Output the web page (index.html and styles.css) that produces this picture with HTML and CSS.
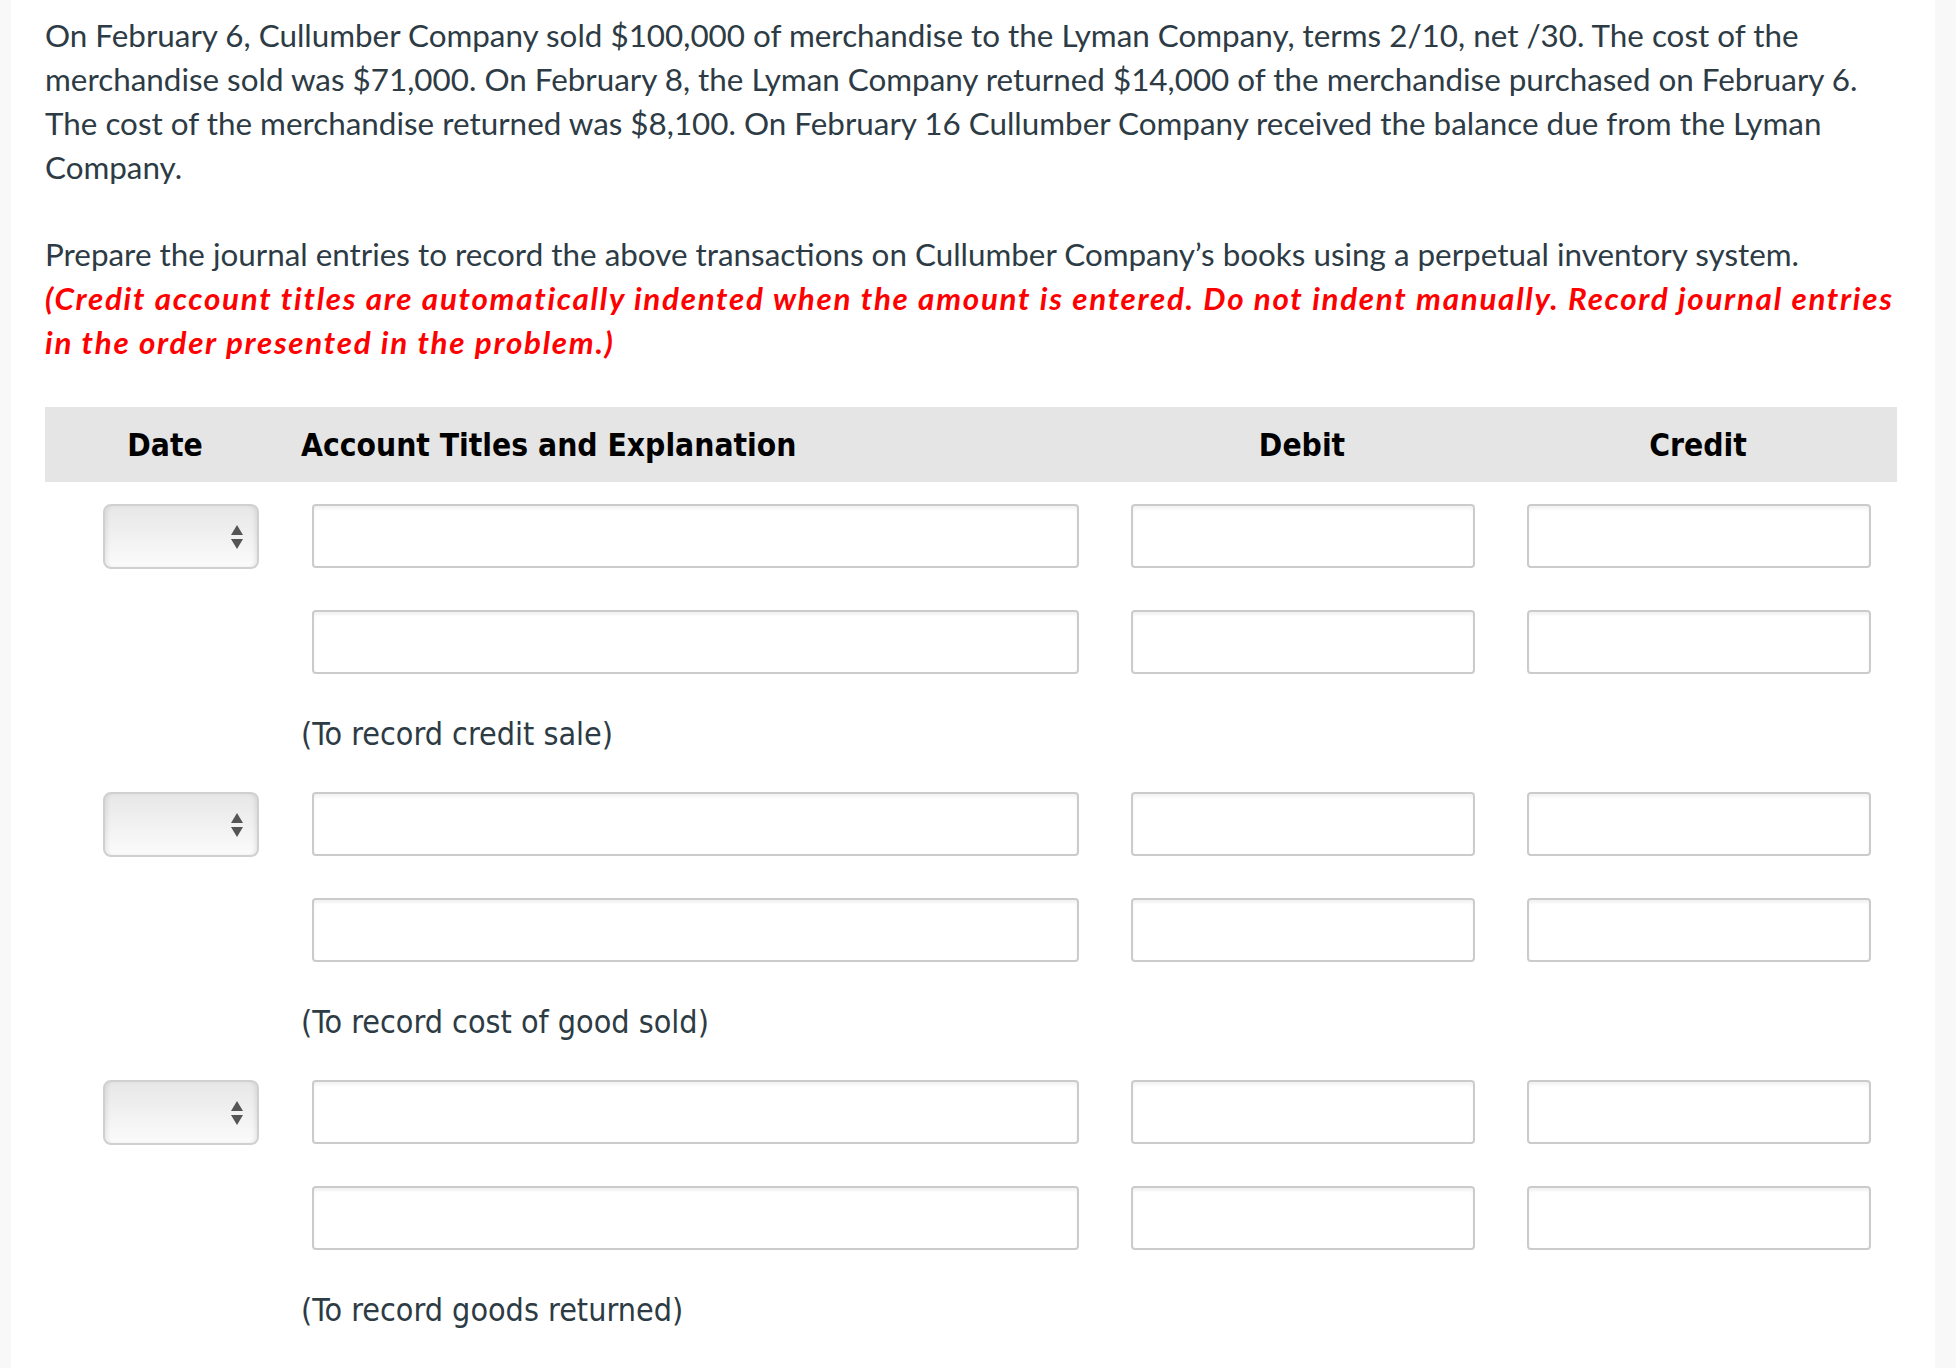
FILE: index.html
```html
<!DOCTYPE html>
<html lang="en">
<head>
<meta charset="utf-8">
<title>Journal entries</title>
<link rel="stylesheet" href="styles.css">
</head>
<body>
<div class="page">
  <p class="text">On February 6, Cullumber Company sold $100,000 of merchandise to the Lyman Company, terms 2/10, net /30. The cost of the merchandise sold was $71,000. On February 8, the Lyman Company returned $14,000 of the merchandise purchased on February 6. The cost of the merchandise returned was $8,100. On February 16 Cullumber Company received the balance due from the Lyman Company.</p>
  <p class="text wide">Prepare the journal entries to record the above transactions on Cullumber Company’s books using a perpetual inventory system.<br><em class="note">(Credit account titles are automatically indented when the amount is entered. Do not indent manually. Record journal entries in the order presented in the problem.)</em></p>

  <div class="journal">
    <div class="jhead">
      <div class="h h-date">Date</div>
      <div class="h h-acct">Account Titles and Explanation</div>
      <div class="h h-num">Debit</div>
      <div class="h h-num">Credit</div>
    </div>

    <div class="entry">
      <div class="row">
        <div class="c-date"><div class="select"><svg width="14" height="26" viewBox="0 0 14 26"><path d="M1 11 L7 1 L13 11 Z M1 15 L13 15 L7 25 Z" fill="#555"/></svg></div></div>
        <div class="c-acct"><input class="field acct" type="text"></div>
        <div class="c-debit"><input class="field num" type="text"></div>
        <div class="c-credit"><input class="field num" type="text"></div>
      </div>
      <div class="row">
        <div class="c-date"></div>
        <div class="c-acct"><input class="field acct" type="text"></div>
        <div class="c-debit"><input class="field num" type="text"></div>
        <div class="c-credit"><input class="field num" type="text"></div>
      </div>
      <div class="label">(To record credit sale)</div>
    </div>

    <div class="entry">
      <div class="row">
        <div class="c-date"><div class="select"><svg width="14" height="26" viewBox="0 0 14 26"><path d="M1 11 L7 1 L13 11 Z M1 15 L13 15 L7 25 Z" fill="#555"/></svg></div></div>
        <div class="c-acct"><input class="field acct" type="text"></div>
        <div class="c-debit"><input class="field num" type="text"></div>
        <div class="c-credit"><input class="field num" type="text"></div>
      </div>
      <div class="row">
        <div class="c-date"></div>
        <div class="c-acct"><input class="field acct" type="text"></div>
        <div class="c-debit"><input class="field num" type="text"></div>
        <div class="c-credit"><input class="field num" type="text"></div>
      </div>
      <div class="label">(To record cost of good sold)</div>
    </div>

    <div class="entry">
      <div class="row">
        <div class="c-date"><div class="select"><svg width="14" height="26" viewBox="0 0 14 26"><path d="M1 11 L7 1 L13 11 Z M1 15 L13 15 L7 25 Z" fill="#555"/></svg></div></div>
        <div class="c-acct"><input class="field acct" type="text"></div>
        <div class="c-debit"><input class="field num" type="text"></div>
        <div class="c-credit"><input class="field num" type="text"></div>
      </div>
      <div class="row">
        <div class="c-date"></div>
        <div class="c-acct"><input class="field acct" type="text"></div>
        <div class="c-debit"><input class="field num" type="text"></div>
        <div class="c-credit"><input class="field num" type="text"></div>
      </div>
      <div class="label">(To record goods returned)</div>
    </div>
  </div>
</div>
</body>
</html>
```
FILE: styles.css
```css
html, body {
  margin: 0;
  padding: 0;
  background: #f8f8f8;
}
.page {
  margin: 0 21px 0 11px;
  background: #ffffff;
  padding: 13px 38px 0 34px;
  min-height: 1368px;
  box-sizing: border-box;
}
.text {
  margin: 0 0 43px 0;
  font-family: Lato, "Liberation Sans", sans-serif;
  font-size: 31.4px;
  line-height: 44px;
  color: #2d3b45;
  width: 1860px;
}
.text.wide { width: 1870px; }
.note {
  color: #ff0000;
  font-weight: bold;
  font-style: italic;
  letter-spacing: 1.7px;
}
.journal {
  margin-top: 3px;
  width: 1852px;
}
.jhead {
  display: grid;
  grid-template-columns: 240px 815px 404px 388px;
  height: 75px;
  align-items: center;
  background: #e5e5e5;
  font-family: "DejaVu Sans Condensed", "DejaVu Sans", sans-serif;
  font-stretch: condensed;
  font-weight: bold;
  font-size: 31.5px;
  color: #000;
}
.h-date, .h-num { text-align: center; }
.h-acct { padding-left: 16px; }
.entry {
  display: flex;
  flex-direction: column;
  padding-top: 22px;
}
.entry + .entry { padding-top: 36px; }
.row {
  display: grid;
  grid-template-columns: 240px 815px 404px 388px;
  height: 64px;
}
.row + .row { margin-top: 42px; }
.c-date { padding-left: 58px; }
.c-acct { padding-left: 27px; }
.c-debit { padding-left: 31px; }
.c-credit { padding-left: 23px; }
.field {
  display: block;
  margin: 0;
  box-sizing: border-box;
  height: 64px;
  border: 2px solid #cbcbcb;
  border-radius: 4px;
  background: #fff;
  box-shadow: inset 0 3px 3px rgba(0,0,0,0.05);
  outline: none;
  padding: 0 10px;
  font-size: 26px;
}
.field.acct { width: 767px; }
.field.num { width: 344px; }
.select {
  box-sizing: border-box;
  width: 156px;
  height: 65px;
  border: 2px solid #d0d0d0;
  border-radius: 8px;
  background: linear-gradient(#e7e7e7, #fbfbfb);
  box-shadow: inset 4px 0 4px -2px rgba(0,0,0,0.08), inset -4px 0 4px -2px rgba(0,0,0,0.08);
  display: flex;
  align-items: center;
  justify-content: flex-end;
  padding-right: 13px;
}
.label {
  margin-top: 38px;
  margin-left: 240px;
  padding-left: 16px;
  height: 44px;
  line-height: 44px;
  font-family: "DejaVu Sans Condensed", "DejaVu Sans", sans-serif;
  font-stretch: condensed;
  font-size: 32px;
  color: #2d3b45;
}
```
